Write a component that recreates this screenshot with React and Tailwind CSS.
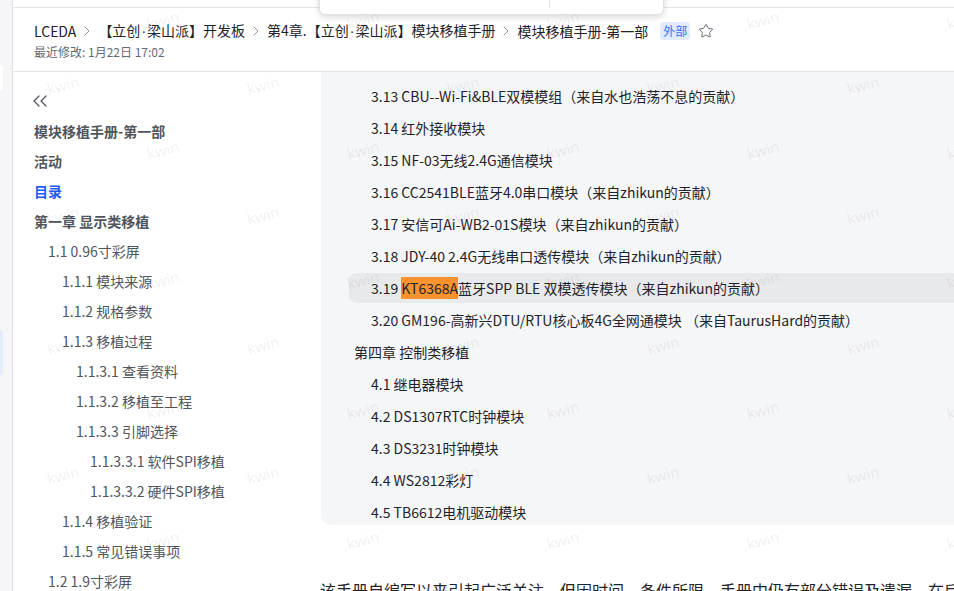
import React from 'react';
import { ChevronRight, ChevronsLeft, Star } from 'lucide-react';

// the CJK font draws U+00B7 full width, so the dot gets a latin face
const Dot = () => <span className="px-[1px] font-['Liberation_Sans',sans-serif]">·</span>;

const crumbs = [
    'LCEDA',
    <>【立创<Dot />梁山派】开发板</>,
    <>第4章.【立创<Dot />梁山派】模块移植手册</>,
    '模块移植手册-第一部',
];

const indent = {
    0: 'pl-0',
    1: 'pl-[14px]',
    2: 'pl-[28px]',
    3: 'pl-[42px]',
    4: 'pl-[56px]',
};

const outline = [
    { text: '模块移植手册-第一部', level: 0, bold: true },
    { text: '活动', level: 0, bold: true },
    { text: '目录', level: 0, bold: true, active: true },
    { text: '第一章 显示类移植', level: 0, bold: true },
    { text: '1.1 0.96寸彩屏', level: 1 },
    { text: '1.1.1 模块来源', level: 2 },
    { text: '1.1.2 规格参数', level: 2 },
    { text: '1.1.3 移植过程', level: 2 },
    { text: '1.1.3.1 查看资料', level: 3 },
    { text: '1.1.3.2 移植至工程', level: 3 },
    { text: '1.1.3.3 引脚选择', level: 3 },
    { text: '1.1.3.3.1 软件SPI移植', level: 4 },
    { text: '1.1.3.3.2 硬件SPI移植', level: 4 },
    { text: '1.1.4 移植验证', level: 2 },
    { text: '1.1.5 常见错误事项', level: 2 },
    { text: '1.2 1.9寸彩屏', level: 1 },
];

const toc = [
    { text: '3.13 CBU--Wi-Fi&BLE双模模组（来自水也浩荡不息的贡献）' },
    { text: '3.14 红外接收模块' },
    { text: '3.15 NF-03无线2.4G通信模块' },
    { text: '3.16 CC2541BLE蓝牙4.0串口模块（来自zhikun的贡献）' },
    { text: '3.17 安信可Ai-WB2-01S模块（来自zhikun的贡献）' },
    { text: '3.18 JDY-40 2.4G无线串口透传模块（来自zhikun的贡献）' },
    { text: '3.19 ', mark: 'KT6368A', rest: '蓝牙SPP BLE 双模透传模块（来自zhikun的贡献）', current: true },
    { text: '3.20 GM196-高新兴DTU/RTU核心板4G全网通模块 （来自TaurusHard的贡献）' },
    { text: '第四章 控制类移植', chapter: true },
    { text: '4.1 继电器模块' },
    { text: '4.2 DS1307RTC时钟模块' },
    { text: '4.3 DS3231时钟模块' },
    { text: '4.4 WS2812彩灯' },
    { text: '4.5 TB6612电机驱动模块' },
];

// staggered "kwin" watermark grid, 65px rows, alternating offsets
const marks = [];
for (let row = 0; row < 9; row++) {
    const y = 20 + row * 65;
    const start = row % 2 === 0 ? 163 : 63;
    for (let x = start; x < 1000; x += 200) marks.push({ x, y });
}

const Watermark = () => (
    <div className="absolute inset-0 pointer-events-none overflow-hidden">
        {marks.map((m, i) => (
            <span
                key={i}
                className="absolute -translate-x-1/2 -translate-y-1/2 -rotate-[14deg] text-[15px] text-black/[0.07] font-['Noto_Sans',sans-serif]"
                style={{ left: m.x, top: m.y }}
            >
                kwin
            </span>
        ))}
    </div>
);

const Header = () => (
    <div className="h-[65px] border-t border-b border-[#e4e5e7] pt-[13px] pl-[21px]">
        <div className="flex items-center h-[20px] text-[14px] text-[#1f2329] whitespace-nowrap">
            {crumbs.map((c, i) => (
                <React.Fragment key={i}>
                    {i > 0 && <ChevronRight size={16} strokeWidth={1.5} className="mx-[3px] text-[#8f959e]" />}
                    <span>{c}</span>
                </React.Fragment>
            ))}
            <span className="ml-[12px] px-[3px] h-[18px] leading-[18px] rounded-[4px] bg-[#e1eaff] text-[#3370ff] text-[12px]">外部</span>
            <Star size={16} strokeWidth={1.5} className="ml-[8px] text-[#646a73]" />
        </div>
        <div className="mt-[3px] text-[12px] leading-[16px] text-[#646a73]">最近修改: 1月22日 17:02</div>
    </div>
);

const Sidebar = () => (
    <div className="w-[308px] shrink-0 pt-[14px] pl-[21px]">
        <div className="h-[30px] flex items-center">
            <ChevronsLeft size={24} strokeWidth={1.3} className="-ml-[6px] text-[#51565d]" />
        </div>
        {outline.map(item => (
            <div
                key={item.text}
                className={`h-[30px] flex items-center text-[14px] ${indent[item.level]} ${item.bold ? 'font-semibold' : ''} ${item.active ? 'text-[#1f5bf0]' : 'text-[#51565d]'}`}
            >
                {item.text}
            </div>
        ))}
    </div>
);

const Content = () => (
    <div className="flex-1 min-w-0">
        <div className="h-[453px] bg-[#f5f6f7] rounded-bl-[10px] pt-[8px] overflow-hidden">
            {toc.map(row => (
                <div key={row.text} className="h-[32px] flex items-center">
                    <div
                        className={`ml-[28px] flex-1 h-[30px] flex items-center text-[14px] text-[#1f2329] whitespace-pre ${row.chapter ? 'pl-[5px]' : 'pl-[22px]'} ${row.current ? 'bg-[#e8e9eb] rounded-l-[8px]' : ''}`}
                    >
                        <span>
                            {row.text}
                            {row.mark && <span className="bg-[#fd922f] py-[1px]">{row.mark}</span>}
                            {row.rest}
                        </span>
                    </div>
                </div>
            ))}
        </div>
        <p className="mt-[53px] -ml-[1px] text-[16px] leading-[24px] text-[#1f2329] whitespace-nowrap">
            该手册自编写以来引起广泛关注，但因时间、条件所限，手册中仍有部分错误及遗漏，在后续的版本中我们会持续修正。
        </p>
    </div>
);

export default function App() {
    return (
        <div className="relative w-[954px] h-[591px] overflow-hidden flex bg-white font-['Noto_Sans_CJK_SC',sans-serif]">
            <div className="w-[13px] shrink-0 bg-[#f5f6f7] border-r border-[#dee0e3] flex flex-col">
                <div className="mt-[65px] h-[25px] w-[3px] bg-white rounded-r-[3px]" />
                <div className="mt-[240px] h-[45px] w-[3px] bg-[#e6ecfa] rounded-r-[3px]" />
            </div>
            <div className="flex-1 min-w-0 flex flex-col pt-[7px]">
                <Header />
                <div className="flex flex-1 min-h-0">
                    <Sidebar />
                    <Content />
                </div>
            </div>

            {/* half-hidden toolbar popup sitting over the header */}
            <div className="absolute left-[319px] -top-[10px] w-[345px] h-[25px] bg-white border border-[#dee0e3] rounded-b-[6px] shadow-[0_2px_6px_rgba(31,35,41,0.18)]">
                <div className="absolute left-[229px] top-0 h-[17px] w-px bg-[#dee0e3]" />
            </div>

            <Watermark />
        </div>
    );
}
